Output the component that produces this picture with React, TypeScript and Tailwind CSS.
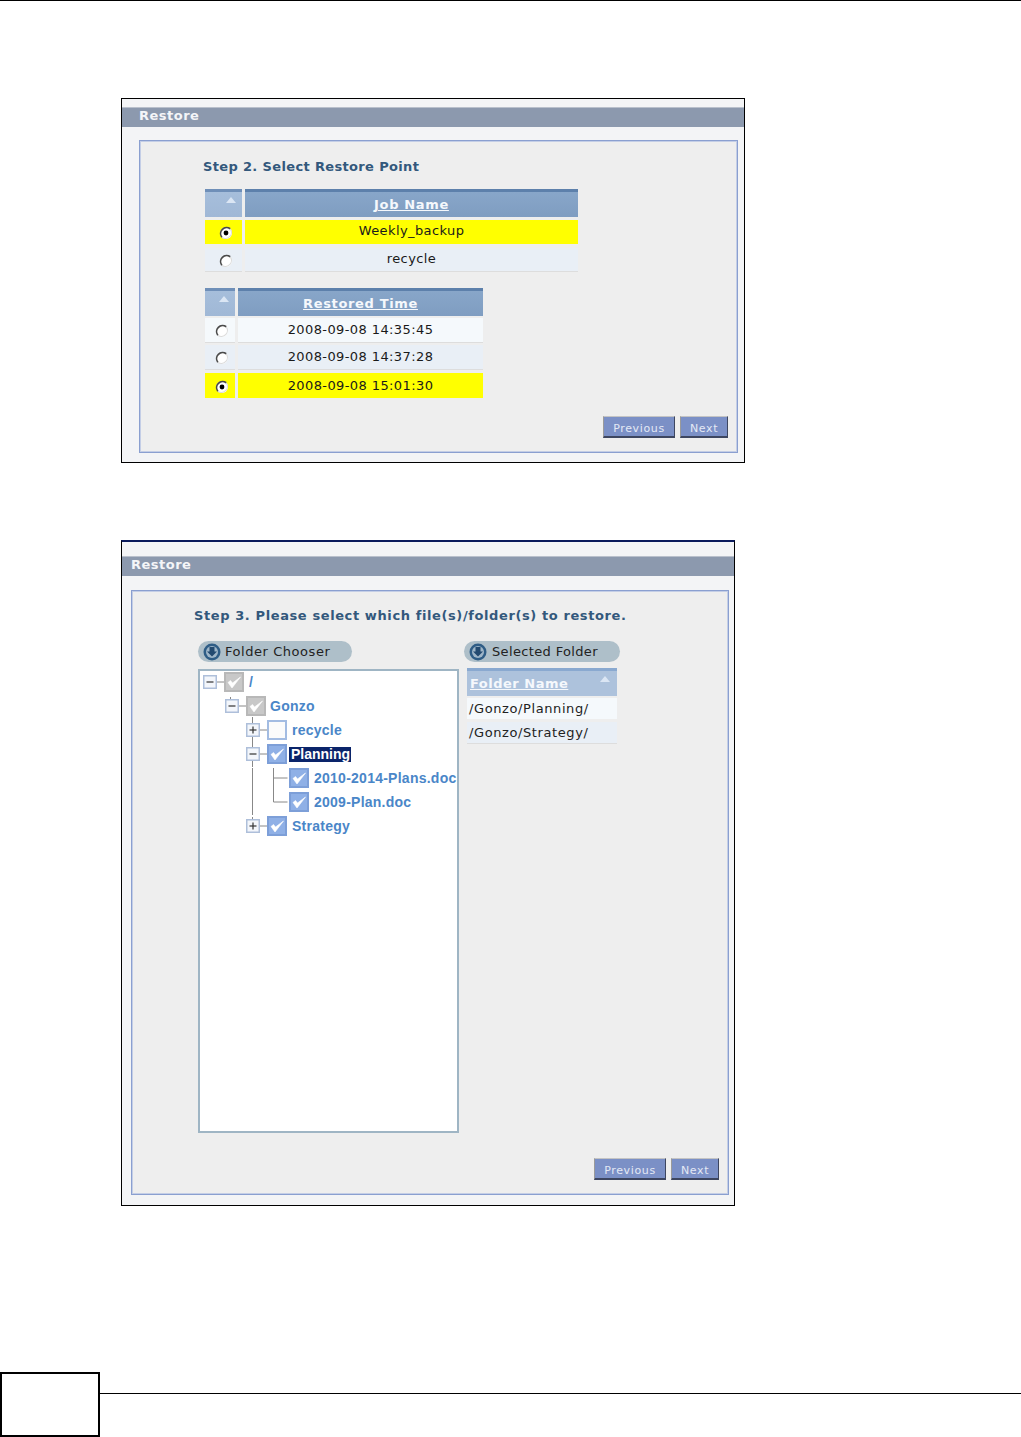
import React from "react";

const verdana = "font-['DejaVu_Sans',sans-serif]";

function Radio({ on }: { on?: boolean }) {
  return (
    <svg width="14" height="14" viewBox="0 0 14 14">
      <circle cx="7" cy="7" r="6" fill="#fff" />
      <path d="M2.8 11.2A6 6 0 0 0 11.2 2.8" fill="none" stroke="#dcdcdc" strokeWidth="1.2" />
      <path d="M11.2 2.8A6 6 0 0 0 2.8 11.2" fill="none" stroke="#4a4a4a" strokeWidth="1.7" />
      {on && <circle cx="7" cy="7" r="2.4" fill="#000" />}
    </svg>
  );
}

function Check({ kind }: { kind: "gray" | "blue" | "empty" }) {
  const bg = kind === "gray" ? "#c8c8c8" : kind === "blue" ? "#8fb0e6" : "#fbfbfb";
  const edge = kind === "gray" ? "#b8b8b8" : kind === "blue" ? "#7d9fd8" : "#a3bce2";
  return (
    <svg width="20" height="20" viewBox="0 0 20 20" className="shrink-0">
      <rect x="1" y="1" width="18" height="18" fill={bg} stroke={edge} strokeWidth="2" />
      {kind !== "empty" && <path d="M4 10.5 8 16 16.5 5 8.5 11 6.5 8.5Z" fill="#fff" stroke="#fff" strokeWidth="0.6" />}
    </svg>
  );
}

function Expander({ open }: { open?: boolean }) {
  return (
    <svg width="21" height="14" viewBox="0 0 21 14" className="shrink-0">
      <rect x="0.75" y="0.75" width="12.5" height="12.5" fill="#f3f6fb" stroke="#aebfda" strokeWidth="1.5" />
      <path d="M3.5 7h7" stroke="#333" strokeWidth="1.2" />
      {!open && <path d="M7 3.5v7" stroke="#333" strokeWidth="1.2" />}
      <path d="M14 7h7" stroke="#888" />
    </svg>
  );
}

function Btn({ w, label }: { w: string; label: string }) {
  return (
    <div className={`${w} h-[22px] pt-[5px] bg-[#7b90c6] border border-t-[#c4c4c4] border-l-[#9a9a9a] border-r-[#3d4660] border-b-[#3d4660] border-b-2 flex items-center justify-center text-[11px] tracking-[0.65px] text-[#e4e9f5] ${verdana}`}>
      {label}
    </div>
  );
}

function Header({ w, label, arrow }: { w: string; label?: string; arrow?: string }) {
  const light = !!arrow;
  return (
    <div className={`${w} h-[28px] relative border-t-[3px] flex items-center justify-center ${light ? "border-[#6f8fb8] bg-gradient-to-b from-[#a6bedb] to-[#a0b8d6]" : "border-[#5d80ab] bg-gradient-to-b from-[#88a6c9] to-[#7f9dc1]"}`}>
      {arrow && <span className={`absolute top-[5px] ${arrow} w-0 h-0 border-x-[5px] border-x-transparent border-b-[6px] border-b-[#dbe6f4]`} />}
      {label && <span className={`text-[13px] font-bold underline text-[#f5f8fc] tracking-[0.65px] ${verdana}`}>{label}</span>}
    </div>
  );
}

function Row({ c1, c2, gap, h, text, on, bg, mt, pb }: { c1: string; c2: string; gap: string; h: string; text: string; on?: boolean; bg: string; mt: string; pb: string }) {
  return (
    <div className={`flex ${gap} ${mt}`}>
      <div className={`${c1} ${h} ${bg} flex items-center justify-center pl-[4px] pt-[2px]`}>
        <Radio on={on} />
      </div>
      <div className={`${c2} ${h} ${bg} flex items-center justify-center ${pb} text-[13px] tracking-[0.4px] text-[#1a1a1a] ${verdana}`}>
        {text}
      </div>
    </div>
  );
}

function PanelTitle({ pl, mt }: { pl: string; mt: string }) {
  return (
    <div className={`${mt} h-[20px] pb-[4px] bg-[#8c99ae] border-t border-[#b9c0cc] flex items-center ${pl} text-[13px] font-bold tracking-[0.5px] text-[#f4f5f8] ${verdana}`}>
      Restore
    </div>
  );
}

function TreeRow({ pl, exp, check, text, sel, gap = "ml-[5px]" }: { pl: string; exp?: "open" | "closed"; check: "gray" | "blue" | "empty"; text: string; sel?: boolean; gap?: string }) {
  return (
    <div className={`h-[24px] flex items-center ${pl}`}>
      {exp && <Expander open={exp === "open"} />}
      <Check kind={check} />
      <span
        className={`whitespace-nowrap font-['Liberation_Sans',sans-serif] font-bold text-[14px] leading-[15px] ${sel ? "ml-[2px] bg-[#0a246a] text-white pl-[2px] pr-[1px]" : `${gap} tracking-[0.25px] text-[#4a86c8]`}`}
      >
        {text}
      </span>
    </div>
  );
}

function Pill({ w, label, gap, track }: { w: string; label: string; gap: string; track: string }) {
  return (
    <div className={`${w} h-[21px] rounded-full bg-[#aebfc9] flex items-center pl-[5px] ${gap} text-[13px] ${track} text-[#222] ${verdana}`}>
      <svg width="18" height="18" viewBox="0 0 18 18" className="shrink-0">
        <circle cx="9" cy="9" r="8.5" fill="#2f5d86" />
        <circle cx="9" cy="9" r="6" fill="#9fb6c8" />
        <path d="M6.5 4h5v4.5h2.5L9 13.5 4 8.5h2.5Z" fill="#234a70" />
      </svg>
      {label}
    </div>
  );
}

export default function App() {
  return (
    <div className="relative w-[1021px] h-[1437px] bg-white flex flex-col overflow-hidden">
      <div className="h-px bg-black shrink-0" />

      {/* Step 2 */}
      <div className="ml-[121px] mt-[97px] w-[624px] h-[365px] border border-black bg-[#f3f4f6] shrink-0">
        <PanelTitle pl="pl-[17px]" mt="mt-[8px]" />
        <div className="ml-[17px] mt-[13px] w-[599px] h-[313px] border border-[#8a9fd0] shadow-[inset_0_0_0_1px_#c4cee6] bg-[#eeeeee] pl-[65px] pt-[17px] flex flex-col">
          <div className={`-ml-[2px] text-[13px] leading-[18px] font-bold tracking-[0.35px] text-[#33587c] ${verdana}`}>Step 2. Select Restore Point</div>
          <div className="mt-[13px] flex gap-[3px]">
            <Header w="w-[37px]" arrow="left-[21px]" />
            <Header w="w-[333px]" label="Job Name" />
          </div>
          <Row c1="w-[37px]" c2="w-[333px]" gap="gap-[3px]" h="h-[24px]" mt="mt-[3px]" pb="pb-[2px]" bg="bg-[#ffff00]" text="Weekly_backup" on />
          <Row c1="w-[37px]" c2="w-[333px]" gap="gap-[3px]" h="h-[24px]" mt="mt-[4px]" pb="pb-[2px]" bg="bg-[#e9eff6] border-b border-[#dddddd]" text="recycle" />

          <div className="mt-[16px] flex gap-[3px]">
            <Header w="w-[30px]" arrow="left-[14px]" />
            <Header w="w-[245px]" label="Restored Time" />
          </div>
          <Row c1="w-[30px]" c2="w-[245px]" gap="gap-[3px]" h="h-[25px]" mt="mt-[2px]" pb="pb-0" bg="bg-[#f5f9fc] border-b border-[#dddddd]" text="2008-09-08 14:35:45" />
          <Row c1="w-[30px]" c2="w-[245px]" gap="gap-[3px]" h="h-[25px]" mt="mt-[2px]" pb="pb-0" bg="bg-[#e9eff6] border-b border-[#dddddd]" text="2008-09-08 14:37:28" />
          <Row c1="w-[30px]" c2="w-[245px]" gap="gap-[3px]" h="h-[25px]" mt="mt-[3px]" pb="pb-0" bg="bg-[#ffff00]" text="2008-09-08 15:01:30" on />

          <div className="mt-[18px] mr-[9px] flex justify-end gap-[5px]">
            <Btn w="w-[72px]" label="Previous" />
            <Btn w="w-[48px]" label="Next" />
          </div>
        </div>
      </div>

      {/* Step 3 */}
      <div className="ml-[121px] mt-[77px] w-[614px] h-[666px] border border-black border-t-2 border-t-[#0a1a5c] bg-[#f3f4f6] shrink-0">
        <PanelTitle pl="pl-[9px]" mt="mt-[14px]" />
        <div className="ml-[9px] mt-[14px] w-[598px] h-[605px] border border-[#8a9fd0] shadow-[inset_0_0_0_1px_#c4cee6] bg-[#eeeeee] pl-[62px] pt-[16px] flex flex-col">
          <div className={`text-[13px] leading-[18px] font-bold tracking-[0.6px] text-[#33587c] ${verdana}`}>Step 3. Please select which file(s)/folder(s) to restore.</div>
          <div className="mt-[16px] flex">
            <div className="w-[266px] ml-[4px]"><Pill w="w-[154px]" label="Folder Chooser" gap="gap-[4px]" track="tracking-[0.55px]" /></div>
            <Pill w="w-[156px]" label="Selected Folder" gap="gap-[5px]" track="tracking-[0.35px]" />
          </div>
          <div className="mt-[7px] flex">
            <div className="relative ml-[4px] w-[261px] h-[464px] border-2 border-[#9fb5c4] bg-white shrink-0">
              <svg width="257" height="200" className="absolute left-0 top-0 pointer-events-none" fill="none" stroke="#888">
                <path d="M30.5 26v2M52.5 46v6M52.5 66v6M52.5 70v6M52.5 90v6M52.5 97v47M52.5 146v2" />
                <path d="M73.5 97v34h14M73.5 107h14" />
              </svg>
              <div className="relative -mt-[1px]">
                <TreeRow pl="pl-[3px]" exp="open" check="gray" text="/" />
                <TreeRow pl="pl-[25px]" exp="open" check="gray" text="Gonzo" gap="ml-[4px]" />
                <TreeRow pl="pl-[46px]" exp="closed" check="empty" text="recycle" />
                <TreeRow pl="pl-[46px]" exp="open" check="blue" text="Planning" sel />
                <TreeRow pl="pl-[89px]" check="blue" text="2010-2014-Plans.doc" />
                <TreeRow pl="pl-[89px]" check="blue" text="2009-Plan.doc" />
                <TreeRow pl="pl-[46px]" exp="closed" check="blue" text="Strategy" />
              </div>
            </div>
            <div className="ml-[8px] -mt-[1px] w-[150px]">
              <div className="h-[28px] relative border-t-[3px] border-[#8aa9d0] bg-[#adc2dc] flex items-center pl-[3px]">
                <span className={`text-[13px] font-bold underline text-[#f5f8fc] tracking-[0.5px] ${verdana}`}>Folder Name</span>
                <span className="absolute top-[5px] right-[7px] w-0 h-0 border-x-[5px] border-x-transparent border-b-[6px] border-b-[#dbe6f4]" />
              </div>
              <div className={`mt-[2px] h-[21px] pt-[1px] bg-[#f5f9fc] flex items-center pl-[2px] text-[13px] tracking-[0.6px] text-[#222] ${verdana}`}>/Gonzo/Planning/</div>
              <div className={`mt-[3px] h-[22px] pt-[1px] bg-[#e9eff6] border-b border-[#dddddd] flex items-center pl-[2px] text-[13px] tracking-[0.6px] text-[#222] ${verdana}`}>/Gonzo/Strategy/</div>
            </div>
          </div>
          <div className="mt-[25px] mr-[9px] flex justify-end gap-[5px]">
            <Btn w="w-[72px]" label="Previous" />
            <Btn w="w-[48px]" label="Next" />
          </div>
        </div>
      </div>

      {/* Footer */}
      <div className="mt-auto h-[65px] flex shrink-0">
        <div className="w-[100px] h-[65px] border-[2.5px] border-black shrink-0" />
        <div className="flex-1 h-[22px] border-b border-black" />
      </div>
    </div>
  );
}
